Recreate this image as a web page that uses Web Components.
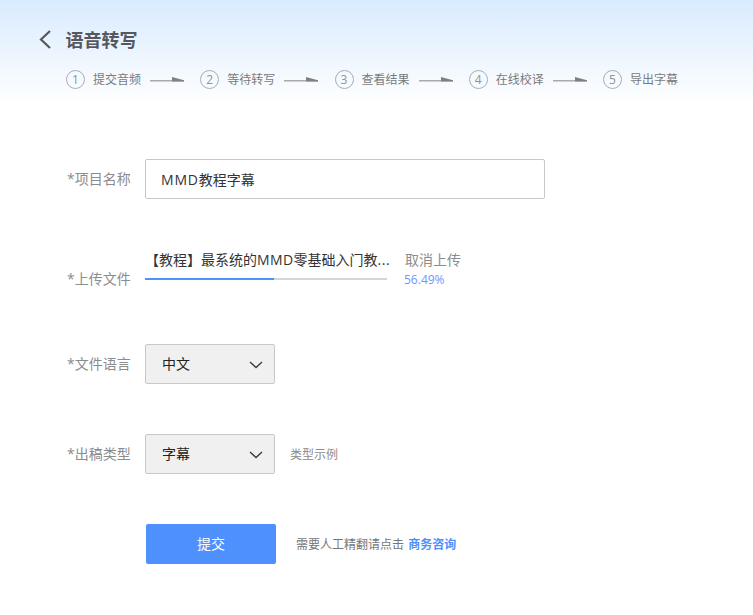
<!DOCTYPE html>
<html lang="zh">
<head>
<meta charset="utf-8">
<title>语音转写</title>
<style>
  html, body { margin:0; padding:0; background:#fff; }
  body { font-family:"Open Sans","Noto Sans CJK SC",sans-serif; }
  .latin { letter-spacing:.8px; }
</style>
</head>
<body>
<script>
const FONT = `"Open Sans","Noto Sans CJK SC",sans-serif`;

class TsStep extends HTMLElement {
  connectedCallback() {
    const s = this.attachShadow({ mode: "open" });
    const last = this.hasAttribute("last");
    s.innerHTML = `
      <style>
        :host { display:flex; align-items:center; height:19px; width:${last ? "auto" : "134.25px"}; flex:none; }
        .n { width:19px; height:19px; box-sizing:border-box; border:1px solid #a9acb2; border-radius:50%;
             display:flex; align-items:center; justify-content:center; font-size:12px; line-height:1; color:#8f9296; flex:none; }
        .t { margin-left:8px; font-size:12px; line-height:18px; color:#7b7b7b; white-space:nowrap; width:49px; }
        svg { margin:1px 0 0 8px; flex:none; display:block; }
      </style>
      <span class="n">${this.getAttribute("n")}</span>
      <span class="t"><slot></slot></span>
      ${last ? "" : `<svg width="34" height="6" viewBox="0 0 34 6"><rect x="0" y="3" width="34" height="1.5" fill="#aaaaaa"/><path d="M22 0 L34 3.2 L34 4.5 L22 4.5 Z" fill="#808080"/></svg>`}`;
  }
}
customElements.define("ts-step", TsStep);

class TsHeader extends HTMLElement {
  connectedCallback() {
    const s = this.attachShadow({ mode: "open" });
    s.innerHTML = `
      <style>
        :host { display:block; height:105px; box-sizing:border-box; padding:29px 0 0 38px;
                background:linear-gradient(#d9ebfe 0%, #ffffff 100%); }
        .top { display:flex; align-items:center; height:22px; }
        svg { flex:none; display:block; }
        h1 { margin:0 0 0 14.5px; font-size:18px; line-height:22px; font-weight:700; color:#55585e; }
        .steps { display:flex; margin:19px 0 0 28px; }
      </style>
      <div class="top">
        <svg width="13" height="20" viewBox="0 0 13 20"><path d="M12 1 L3 9.5 L12 18" fill="none" stroke="#55585e" stroke-width="2.2"/></svg>
        <h1>语音转写</h1>
      </div>
      <div class="steps"><slot></slot></div>`;
  }
}
customElements.define("ts-header", TsHeader);

class TsRow extends HTMLElement {
  connectedCallback() {
    const s = this.attachShadow({ mode: "open" });
    const tall = this.hasAttribute("tall");
    s.innerHTML = `
      <style>
        :host { display:flex; align-items:${tall ? "flex-start" : "center"}; height:${tall ? 45 : 40}px; }
        label { width:78px; padding-left:67px; margin-top:${tall ? 21 : 0}px; flex:none; font-size:14px; line-height:18px; color:#8c8c8c; white-space:nowrap; }
      </style>
      <label>${this.getAttribute("label") || ""}</label>
      <slot></slot>`;
  }
}
customElements.define("ts-row", TsRow);

class TsInput extends HTMLElement {
  connectedCallback() {
    const s = this.attachShadow({ mode: "open" });
    s.innerHTML = `
      <style>
        :host { display:flex; align-items:center; width:400px; height:40px; box-sizing:border-box; padding-left:15px;
                border:1px solid #c8c8c8; border-radius:2px; background:#fff; font-size:14px; color:#333; }
        div { white-space:nowrap; }
      </style><div><slot></slot></div>`;
  }
}
customElements.define("ts-input", TsInput);

class TsSelect extends HTMLElement {
  connectedCallback() {
    const s = this.attachShadow({ mode: "open" });
    s.innerHTML = `
      <style>
        :host { display:flex; align-items:center; justify-content:space-between; width:130px; height:40px; box-sizing:border-box;
                padding:0 11px 0 16px; border:1px solid #c8c8c8; border-radius:2px; background:#f0f0f0; font-size:14px; color:#222; flex:none; }
        span { margin-top:-2px; }
        svg { display:block; margin-top:2px; }
      </style>
      <span><slot></slot></span>
      <svg width="14" height="8" viewBox="0 0 14 8"><path d="M1 1 L7 6.5 L13 1" fill="none" stroke="#33383f" stroke-width="1.3"/></svg>`;
  }
}
customElements.define("ts-select", TsSelect);

class TsUpload extends HTMLElement {
  connectedCallback() {
    const s = this.attachShadow({ mode: "open" });
    s.innerHTML = `
      <style>
        :host { display:block; width:340px; flex:none; }
        .a { display:flex; align-items:center; height:20px; font-size:14px; color:#333; white-space:nowrap; }
        .name { width:260px; flex:none; overflow:hidden; }
        .latin { letter-spacing:.4px; }
        .dots { letter-spacing:.6px; }
        .cancel { color:#8c8c8c; }
        .b { display:flex; align-items:center; height:20px; }
        .track { width:242px; height:2px; background:#d6d6d6; flex:none; }
        .fill { width:129px; height:2px; background:#4d90fe; }
        .pct { margin-left:17px; font-size:12px; color:#6f96ff; }
      </style>
      <div class="a"><span class="name">【教程】最系统的<span class="latin">MMD</span>零基础入门教<span class="dots">...</span></span><span class="cancel">取消上传</span></div>
      <div class="b"><div class="track"><div class="fill"></div></div><span class="pct">56.49%</span></div>`;
  }
}
customElements.define("ts-upload", TsUpload);

class TsForm extends HTMLElement {
  connectedCallback() {
    const s = this.attachShadow({ mode: "open" });
    s.innerHTML = `
      <style>
        :host { display:flex; flex-direction:column; gap:50px; padding-top:54px; }
      </style><slot></slot>`;
  }
}
customElements.define("ts-form", TsForm);

class TsSubmit extends HTMLElement {
  connectedCallback() {
    const s = this.attachShadow({ mode: "open" });
    s.innerHTML = `
      <style>
        :host { display:flex; align-items:center; padding-left:146px; height:40px; }
        button { width:130px; height:40px; border:0; border-radius:2px; background:#4d90fe; color:#fff;
                 font:14px ${FONT}; padding:0 0 2px; flex:none; }
        p { margin:0 0 0 20px; font-size:12px; color:#777; white-space:nowrap; }
        b { color:#4d90fe; font-weight:700; margin-left:1px; }
      </style>
      <button>提交</button>
      <p>需要人工精翻请点击 <b>商务咨询</b></p>`;
  }
}
customElements.define("ts-submit", TsSubmit);
</script>

<ts-header>
  <ts-step n="1">提交音频</ts-step>
  <ts-step n="2">等待转写</ts-step>
  <ts-step n="3">查看结果</ts-step>
  <ts-step n="4">在线校译</ts-step>
  <ts-step n="5" last>导出字幕</ts-step>
</ts-header>
<ts-form>
  <ts-row label="*项目名称"><ts-input><span class="latin">MMD</span>教程字幕</ts-input></ts-row>
  <ts-row label="*上传文件" tall><ts-upload></ts-upload></ts-row>
  <ts-row label="*文件语言"><ts-select>中文</ts-select></ts-row>
  <ts-row label="*出稿类型"><ts-select>字幕</ts-select><span style="margin-left:15px;font-size:12px;color:#8c8c8c">类型示例</span></ts-row>
  <ts-submit></ts-submit>
</ts-form>
</body>
</html>
